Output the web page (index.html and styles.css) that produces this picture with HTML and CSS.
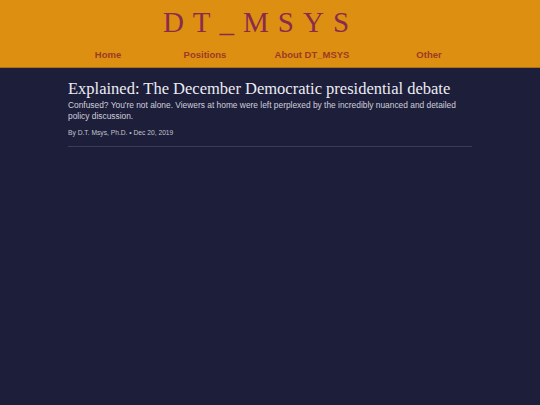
FILE: index.html
```html
<!DOCTYPE html>
<html lang="en">
<head>
    <meta charset="UTF-8">
    <meta name="viewport" content="width=device-width, initial-scale=1.0">
    <title>DT_MSYS</title>
    <link rel="stylesheet" href="styles.css">
</head>
<body>
    <div class="header">
        <div class="brand">DT_MSYS</div>
        <nav class="nav">
            <a href="#">Home</a>
            <a href="#">Positions</a>
            <a href="#">About DT_MSYS</a>
            <a href="#">Other</a>
        </nav>
    </div>

    <div class="content">
        <div class="article">
            <h1>Explained: The December Democratic presidential debate</h1>
            <p class="summary">Confused? You're not alone. Viewers at home were left perplexed by the incredibly nuanced and detailed policy discussion.</p>
            <div class="byline">By D.T. Msys, Ph.D. &bull; Dec 20, 2019</div>
        </div>
    </div>
</body>
</html>
```

FILE: styles.css
```css
body {
    margin: 0;
    padding: 0;
    min-height: 405px;
    background: #1d1e3a;
    font-family: "Liberation Sans", Arial, sans-serif;
    color: #d6d6de;
}

.header {
    background: #dd8f12;
    border-bottom: 1px solid #a8701c;
    height: 68px;
    box-sizing: border-box;
    padding-top: 7px;
}

.brand {
    text-align: center;
    font-family: "Liberation Serif", "Times New Roman", serif;
    font-size: 29px;
    letter-spacing: 9px;
    padding-right: 19px;
    color: #8b2b4c;
    line-height: 30px;
}

.nav {
    display: grid;
    grid-template-columns: 108px 86px 128px 106px;
    justify-content: start;
    margin-top: 12px;
    padding-left: 54px;
}

.nav a {
    text-align: center;
    font-size: 9.5px;
    font-weight: bold;
    color: #9c3a22;
    text-decoration: none;
}

.content {
    padding: 0 68px;
}

.article {
    padding-top: 10px;
    padding-bottom: 10px;
    border-bottom: 1px solid #3b3d58;
}

.article h1 {
    margin: 0;
    font-family: "Liberation Serif", "Times New Roman", serif;
    font-weight: normal;
    font-size: 16.5px;
    line-height: 21px;
    color: #ececf2;
}

.summary {
    margin: 1px 0 0;
    font-size: 8.4px;
    line-height: 11px;
    color: #d0d0da;
}

.byline {
    margin-top: 7px;
    font-size: 6.7px;
    color: #c4c4cf;
}
```
